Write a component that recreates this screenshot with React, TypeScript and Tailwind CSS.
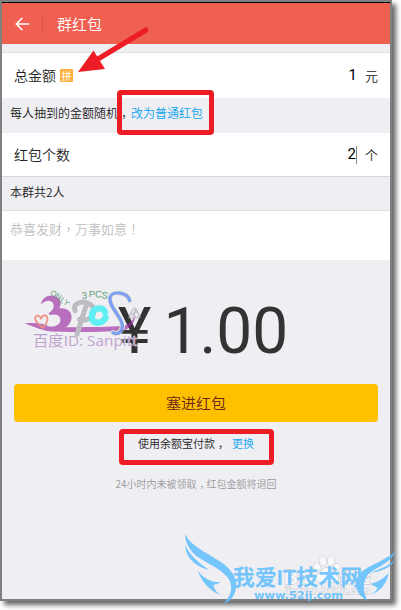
import { useState } from "react";

function Comma() {
  return <span className="-mr-[3px] pl-[3px]">，</span>;
}

function BackIcon() {
  return (
    <svg viewBox="0 0 14 14" className="size-3.5" fill="none" stroke="#fff" strokeWidth="1.7" aria-hidden>
      <path d="M14 7H1.5M7.2 1L1.4 7l5.8 6" />
    </svg>
  );
}

function Arrow() {
  return (
    <svg viewBox="0 0 72 48" className="pointer-events-none absolute left-[74px] top-6 z-10 w-[72px]" aria-hidden>
      <path d="M70 4L22 33" stroke="#ee1c25" strokeWidth="5.2" strokeLinecap="round" />
      <path d="M2 46L17.5 24.5L29 43Z" fill="#ee1c25" />
    </svg>
  );
}

function Highlight({ className }: { className: string }) {
  return (
    <span
      aria-hidden
      className={`pointer-events-none absolute z-10 rounded-sm border-5 border-[#ee1c25] ${className}`}
    />
  );
}

function LogoMark() {
  return (
    <svg
      viewBox="0 0 450 250"
      className="pointer-events-none absolute left-2 top-[10px] w-[150px]"
      fill="none"
      aria-hidden
    >
      <g opacity=".66">
        <path
          d="M92 103C97 85 111 75 128 77C149 80 158 96 148 115C176 112 190 130 183 152C176 172 153 184 124 184C100 183 70 171 44 160C73 159 94 157 119 170C141 170 154 160 151 146C148 134 137 131 119 135L116 129C128 122 134 111 130 101C124 88 108 90 92 103Z"
          fill="#9c2fa2"
        />
        <path d="M110 171C190 172 278 172 338 168C354 164 367 155 377 134C374 163 355 181 334 182C265 187 168 187 110 183Z" fill="#9c2fa2" />
        <path
          d="M99 174C87 164 72 153 76 142C82 132 93 140 93 148C96 134 109 132 112 143C115 154 106 164 99 174Z"
          stroke="#f4604c"
          strokeWidth="5"
        />
        <path d="M195 122C187 101 212 91 233 99C257 108 256 135 238 146C228 152 216 150 209 148M228 108C219 136 210 164 201 193" stroke="#a3a3a8" strokeWidth="15" strokeLinecap="round" />
        <path d="M285 126C278 110 252 112 247 130C241 151 253 160 266 158C279 156 287 145 287 142" stroke="#15eef2" strokeWidth="19" strokeLinecap="round" />
        <path d="M359 92C354 68 309 60 301 80C292 106 334 139 337 165C338 185 323 196 309 188" stroke="#dce9c2" strokeWidth="15" strokeLinecap="round" />
        <path d="M359 92C354 68 309 60 301 80C292 106 334 139 337 165C338 185 323 196 309 188" stroke="#4777f2" strokeWidth="10" strokeLinecap="round" />
        <path d="M356 143C366 130 361 120 374 114C386 119 378 130 392 142C377 138 370 148 356 143ZM365 134L382 124M369 146L377 114" stroke="#aaa4ae" strokeWidth="4" />
      </g>
      <g fill="#63a17c" fontFamily="Liberation Sans, sans-serif" fontSize="29">
        <text transform="translate(119 75) rotate(22)" fontSize="24">O</text>
        <text transform="translate(134 82) rotate(32)" fontSize="24">N</text>
        <text transform="translate(148 93) rotate(42)" fontSize="24">L</text>
        <text transform="translate(158 99) rotate(42)" fontSize="24">Y</text>
        <text transform="translate(217 87) rotate(-8)">3</text>
        <text transform="translate(236 82)">P</text>
        <text transform="translate(254 81) rotate(6)">C</text>
        <text transform="translate(272 83) rotate(14)">S</text>
      </g>
      <text
        x="69"
        y="227"
        fontFamily="Open Sans, Noto Sans CJK SC, sans-serif"
        fontSize="46"
        fontWeight="400"
        fill="#bea4cd"
        stroke="#f4f1f7"
        strokeWidth="2"
        paintOrder="stroke"
      >
        百度ID: Sanpitt
      </text>
    </svg>
  );
}

function SiteMark() {
  return (
    <svg
      viewBox="0 0 693 270"
      className="pointer-events-none absolute bottom-0 right-0 w-[231px]"
      aria-hidden
    >
      <g fill="#f8f8fa" stroke="#d0d0d5" strokeWidth="4" paintOrder="stroke">
        <ellipse cx="441" cy="141" rx="9" ry="12" />
        <ellipse cx="459" cy="123" rx="10" ry="14" />
        <ellipse cx="483" cy="123" rx="10" ry="14" />
        <ellipse cx="501" cy="143" rx="9" ry="12" />
        <path d="M470 143C458 143 455 157 443 164C431 175 441 190 458 187C468 185 476 185 487 187C504 190 512 176 498 164C486 157 483 143 470 143Z" />
        <g fontFamily="Liberation Sans, Noto Sans CJK SC, sans-serif" fontWeight="700">
          <text x="342" y="192" fontSize="58">Bai</text>
          <text x="510" y="188" fontSize="46">经验</text>
          <text x="344" y="223" fontSize="29">jingyan.baidu.com</text>
        </g>
      </g>
      <g fill="#59bdff" opacity=".82">
        <path d="M45 42C62 78 111 99 151 125C195 153 207 189 194 219C187 236 178 246 160 252C181 230 189 207 180 184C164 151 117 134 85 112C59 94 45 67 45 42Z" />
        <path d="M46 75C59 107 84 127 118 150C79 141 45 113 46 75Z" />
        <path d="M82 150C100 176 120 186 152 187C139 193 134 194 130 195C134 211 142 219 153 226C119 214 95 184 82 150Z" />
        <path d="M677 91C671 117 640 134 611 151C578 169 574 204 593 243C564 229 552 199 560 177C572 147 609 136 637 120C656 110 668 103 677 91Z" />
        <path d="M675 117C666 142 639 153 604 158C632 145 658 139 675 117Z" />
        <path d="M656 159C637 180 625 184 602 192C612 197 616 200 623 203C619 213 610 220 601 224C628 216 650 194 656 159Z" />
        <g fontWeight="700">
          <text x="188" y="196" fontFamily="Liberation Sans, Noto Sans CJK SC, sans-serif" fontSize="66">
            我爱IT技术网
          </text>
          <text x="252" y="238" fontFamily="DejaVu Sans, sans-serif" fontSize="34">
            www.52ij.com
          </text>
        </g>
      </g>
    </svg>
  );
}

export default function App() {
  const [amount, setAmount] = useState("1");
  const [count, setCount] = useState("2");
  const [message, setMessage] = useState("");

  return (
    <div className="relative flex min-h-screen flex-col bg-white pr-[9px] pb-[9px] font-['Noto_Sans_CJK_SC',sans-serif] font-[350] text-[#222]">
      <main className="relative flex flex-1 flex-col border-2 border-[#808080] bg-[#efeef3] shadow-[4px_4px_5px_#666]">
        <header className="flex h-[42px] items-center border-t border-t-black bg-[#ef6050] pl-[13px] text-white">
          <button type="button" aria-label="返回">
            <BackIcon />
          </button>
          <span className="ml-[13px] h-5 w-px bg-[#d95549]" />
          <h1 className="ml-[14px] text-[15px] leading-5 font-[350]">群红包</h1>
        </header>

        <div className="mt-2 flex h-[46px] items-center border-t border-[#dededf] bg-white px-3 text-[14px]">
          <label htmlFor="amount">总金额</label>
          <span className="ml-1 grid size-[13px] place-items-center rounded-[1px] bg-[#ffb03c] text-[10px] leading-3 font-normal text-white">
            拼
          </span>
          <input
            id="amount"
            value={amount}
            onChange={(e) => setAmount(e.target.value)}
            inputMode="decimal"
            className="min-w-0 flex-1 text-right font-[Roboto,sans-serif] text-[15px] font-normal text-black outline-none"
          />
          <span className="ml-2 text-[13px]">元</span>
        </div>

        <p className="h-[35px] pl-2 pt-1.5 text-[12px] leading-[18px]">
          每人抽到的金额随机
          <Comma />
          <span className="relative ml-px inline-block">
            <a href="#normal" className="text-[#0aa5ee]">
              改为普通红包
            </a>
            <Highlight className="-left-3.5 -right-[11px] -top-3.5 -bottom-[13px]" />
          </span>
        </p>

        <div className="flex h-11 items-center border-b border-[#d8d8da] bg-white px-3 text-[14px]">
          <label htmlFor="count">红包个数</label>
          <input
            id="count"
            value={count}
            onChange={(e) => setCount(e.target.value)}
            inputMode="numeric"
            className="min-w-0 flex-1 text-right font-[Roboto,sans-serif] text-[15px] font-normal text-black outline-none"
          />
          <span className="h-[18px] w-px bg-[#888]" />
          <span className="ml-2 text-[13px]">个</span>
        </div>

        <p className="h-[33px] pl-2 pt-1.5 text-[12px] leading-[18px]">本群共2人</p>

        <textarea
          aria-label="恭喜发财"
          value={message}
          onChange={(e) => setMessage(e.target.value)}
          placeholder="恭喜发财，万事如意！"
          className="block h-[50px] w-full resize-none border-t border-[#dededf] bg-white px-2 pt-2 font-['Noto_Sans_CJK_TC',sans-serif] text-[13px] leading-5 outline-none placeholder:text-[#c0c0c0]"
        />

        <section className="relative px-3 pt-10 text-center">
          <p className="flex justify-center gap-3 pl-3.5 font-[Roboto,sans-serif] text-[64px] leading-16 font-normal text-[#333]">
            <span>¥</span>
            <span>1.00</span>
          </p>
          <LogoMark />
          <button
            type="button"
            className="mt-5 h-[38px] w-full rounded bg-[#ffc000] text-[15px] text-[#6b2418]"
          >
            塞进红包
          </button>
          <p className="mt-[13px] text-[11px] leading-4">
            <span className="relative inline-block">
              使用余额宝付款
              <Comma />
              <a href="#change" className="ml-1.5 text-[#0aa5ee]">
                更换
              </a>
              <Highlight className="-left-[19px] -right-5 -top-1.5 -bottom-3.5" />
            </span>
          </p>
          <p className="mt-[25px] text-[10px] leading-4 text-[#999]">
            24小时内未被领取
            <Comma />
            红包金额将退回
          </p>
        </section>
        <Arrow />
      </main>
      <SiteMark />
    </div>
  );
}
